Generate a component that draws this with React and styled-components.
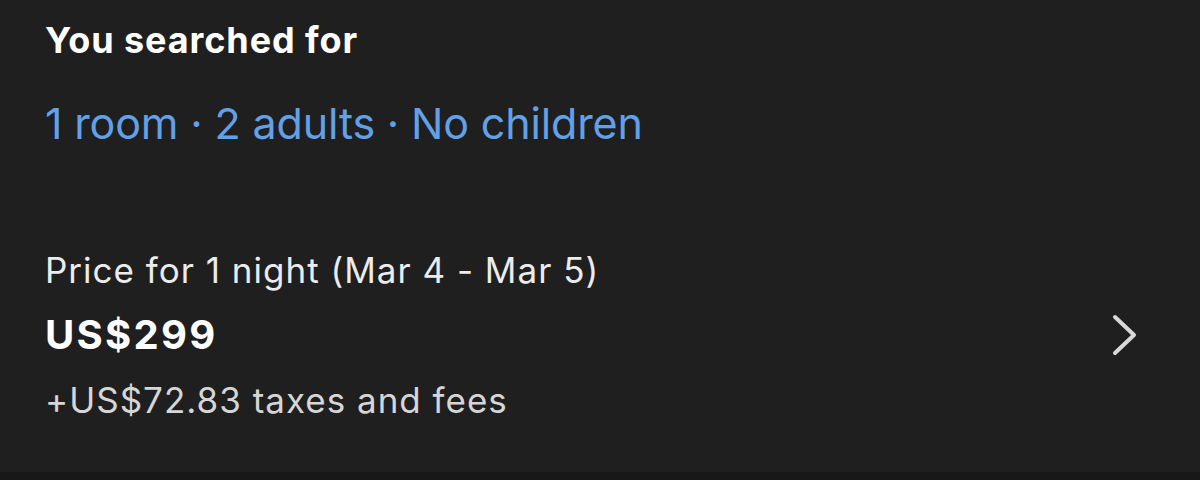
import React from 'react'
import styled, { createGlobalStyle } from 'styled-components'

const GlobalStyle = createGlobalStyle`
    html, body {
        margin: 0;
        padding: 0;
        background: #1f1f1f;
        font-family: Inter, "Noto Sans", sans-serif;
        -webkit-font-smoothing: antialiased;
    }
`

function App() {
    return (
        <Page>
            <GlobalStyle />
            <Summary>
                <Heading>You searched for</Heading>
                <Occupancy>1 room · 2 adults · No children</Occupancy>
            </Summary>
            <PriceRow>
                <PriceInfo>
                    <PriceLabel>Price for 1 night (Mar 4 - Mar 5)</PriceLabel>
                    <Price>US$299</Price>
                    <Fees>+US$72.83 taxes and fees</Fees>
                </PriceInfo>
                <Chevron viewBox="0 0 26 42" aria-hidden="true">
                    <polyline points="3,3 22,21 3,39" />
                </Chevron>
            </PriceRow>
            <Divider />
        </Page>
    )
}

const Page = styled.div`
    width: 1200px;
    height: 480px;
    display: flex;
    flex-direction: column;
    background: #1f1f1f;
    overflow: hidden;
`

const Summary = styled.section`
    display: flex;
    flex-direction: column;
    gap: 35px;
    padding: 18px 45px 0;
`

const Heading = styled.h2`
    margin: 0;
    font-size: 36px;
    line-height: 44px;
    font-weight: 700;
    color: #ffffff;
    letter-spacing: 0.9px;
`

const Occupancy = styled.div`
    font-size: 43px;
    line-height: 52px;
    color: #62a0e8;
    letter-spacing: -0.15px;
`

const PriceRow = styled.section`
    flex: 1;
    display: flex;
    align-items: center;
    justify-content: space-between;
    padding: 100px 62px 51px 45px;
`

const PriceInfo = styled.div`
    display: flex;
    flex-direction: column;
    gap: 20px;
`

const PriceLabel = styled.div`
    font-size: 35px;
    line-height: 42px;
    color: #ececec;
    letter-spacing: 1px;
`

const Price = styled.div`
    font-size: 40px;
    line-height: 48px;
    font-weight: 700;
    color: #ffffff;
    letter-spacing: 2.3px;
`

const Fees = styled.div`
    font-size: 35px;
    line-height: 42px;
    color: #d6d6d6;
    letter-spacing: 1px;
`

const Chevron = styled.svg`
    width: 26px;
    height: 42px;
    fill: none;
    stroke: #d8d8d8;
    stroke-width: 4;
    stroke-linecap: round;
    stroke-linejoin: round;
`

const Divider = styled.div`
    height: 8px;
    background: #181818;
`

export default App
